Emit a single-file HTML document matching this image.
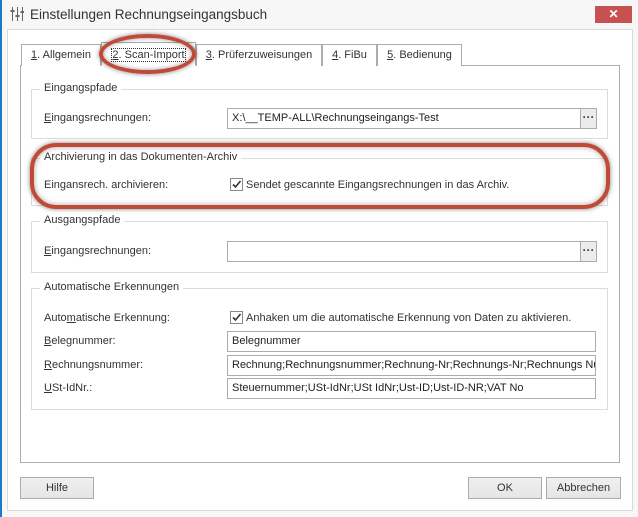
<!DOCTYPE html>
<html><head><meta charset="utf-8"><style>
*{box-sizing:border-box;margin:0;padding:0}
body{width:638px;height:517px;background:#f7f7f7;font-family:"Liberation Sans",sans-serif;font-size:11px;color:#222;position:relative;overflow:hidden}
.a{position:absolute}
.lbl{position:absolute;white-space:nowrap;font-size:11px;color:#333}
.gb{position:absolute;border:1px solid #dcdcdc}
.gt{position:absolute;background:#fff;padding:0 4px;top:-8px;left:8px;color:#333;white-space:nowrap}
.inp{position:absolute;background:#fff;border:1px solid #acacac;height:21px;padding:3px 4px;white-space:nowrap;overflow:hidden;color:#222}
.dots{position:absolute;width:17px;height:21px;border:1px solid #acacac;background:#ececec;font-size:12px;text-align:center;line-height:16px;color:#444;font-weight:bold}
.tab{position:absolute;top:44px;height:22px;border:1px solid #acacac;border-bottom:none;background:#fff;padding:4px 0 0;text-align:center;white-space:nowrap;color:#333}
.btn{position:absolute;height:22px;border:1px solid #acacac;background:linear-gradient(#f0f0f0,#e5e5e5);text-align:center;line-height:20px;color:#333}
.cb{position:absolute;width:13px;height:13px;border:1px solid #888;background:#fff}
u{text-decoration:underline}
</style></head><body>
<div class="a" style="left:0;top:0;width:2px;height:517px;background:#1979ca"></div>
<svg class="a" style="left:10px;top:7px" width="14" height="14"><g stroke="#666" stroke-width="1"><path d="M2.5 0V14M7.5 0V14M12.5 0V14"/><path d="M0.5 4H4.5M5.5 9H9.5M10.5 5H14.5" stroke-width="2"/></g></svg>
<div class="lbl" style="left:30px;top:7px;font-size:13.5px;color:#333">Einstellungen Rechnungseingangsbuch</div>
<div class="a" style="left:595px;top:6px;width:37px;height:17px;background:#c75050;color:#fff;text-align:center;font-size:12px;line-height:17px;font-weight:bold">✕</div>
<div class="a" style="left:7px;top:29px;width:626px;height:482px;background:#fff;border:1px solid #d9d9d9"></div>
<div class="a" style="left:20px;top:65px;width:600px;height:398px;border:1px solid #acacac;background:#fff"></div>
<div class="tab" style="left:21px;width:80px"><u>1</u>. Allgemein</div>
<div class="tab" style="left:101px;top:42px;height:24px;width:95px;padding-top:6px;border-bottom:1px solid #fff"><span style="outline:1px dotted #333"><u>2</u>. Scan-Import</span></div>
<div class="tab" style="left:196px;width:126px"><u>3</u>. Prüferzuweisungen</div>
<div class="tab" style="left:322px;width:55px"><u>4</u>. FiBu</div>
<div class="tab" style="left:377px;width:85px"><u>5</u>. Bedienung</div>

<div class="gb" style="left:31px;top:89px;width:577px;height:50px"><span class="gt">Eingangspfade</span></div>
<div class="lbl" style="left:44px;top:112px"><u>E</u>ingangsrechnungen:</div>
<div class="inp" style="left:227px;top:108px;width:354px">X:\__TEMP-ALL\Rechnungseingangs-Test</div>
<div class="dots" style="left:580px;top:108px">···</div>

<div class="gb" style="left:31px;top:158px;width:577px;height:48px"><span class="gt">Archivierung in das Dokumenten-Archiv</span></div>
<div class="lbl" style="left:44px;top:179px">Eingansrech. archivieren:</div>
<div class="cb" style="left:230px;top:178px"><svg width="11" height="11" style="position:absolute;left:0;top:0"><path d="M2 5.5L4.5 8L9.5 2" stroke="#333" stroke-width="1.6" fill="none"/></svg></div>
<div class="lbl" style="left:246px;top:179px">Sendet gescannte Eingangsrechnungen in das Archiv.</div>

<div class="gb" style="left:31px;top:221px;width:577px;height:52px"><span class="gt">Ausgangspfade</span></div>
<div class="lbl" style="left:44px;top:245px"><u>E</u>ingangsrechnungen:</div>
<div class="inp" style="left:227px;top:241px;width:354px"></div>
<div class="dots" style="left:580px;top:241px">···</div>

<div class="gb" style="left:31px;top:288px;width:577px;height:122px"><span class="gt">Automatische Erkennungen</span></div>
<div class="lbl" style="left:44px;top:312px">Auto<u>m</u>atische Erkennung:</div>
<div class="cb" style="left:230px;top:311px"><svg width="11" height="11" style="position:absolute;left:0;top:0"><path d="M2 5.5L4.5 8L9.5 2" stroke="#333" stroke-width="1.6" fill="none"/></svg></div>
<div class="lbl" style="left:246px;top:312px">Anhaken um die automatische Erkennung von Daten zu aktivieren.</div>
<div class="lbl" style="left:44px;top:335px"><u>B</u>elegnummer:</div>
<div class="inp" style="left:227px;top:331px;width:369px">Belegnummer</div>
<div class="lbl" style="left:44px;top:359px"><u>R</u>echnungsnummer:</div>
<div class="inp" style="left:227px;top:355px;width:369px">Rechnung;Rechnungsnummer;Rechnung-Nr;Rechnungs-Nr;Rechnungs Num</div>
<div class="lbl" style="left:44px;top:382px"><u>U</u>St-IdNr.:</div>
<div class="inp" style="left:227px;top:378px;width:369px">Steuernummer;USt-IdNr;USt IdNr;Ust-ID;Ust-ID-NR;VAT No</div>

<div class="btn" style="left:20px;top:477px;width:74px">Hilfe</div>
<div class="btn" style="left:468px;top:477px;width:74px">OK</div>
<div class="btn" style="left:546px;top:477px;width:75px">Abbrechen</div>

<div class="a" style="left:99px;top:34px;width:97px;height:40px;border:4px solid #c04a38;border-radius:50%;box-shadow:0 0 5px rgba(0,0,0,.5),inset 0 0 5px rgba(0,0,0,.4)"></div>
<div class="a" style="left:30px;top:143px;width:580px;height:66px;border:4px solid #c04a38;border-radius:26px;box-shadow:0 0 5px rgba(0,0,0,.5),inset 0 0 6px rgba(0,0,0,.35)"></div>
</body></html>
